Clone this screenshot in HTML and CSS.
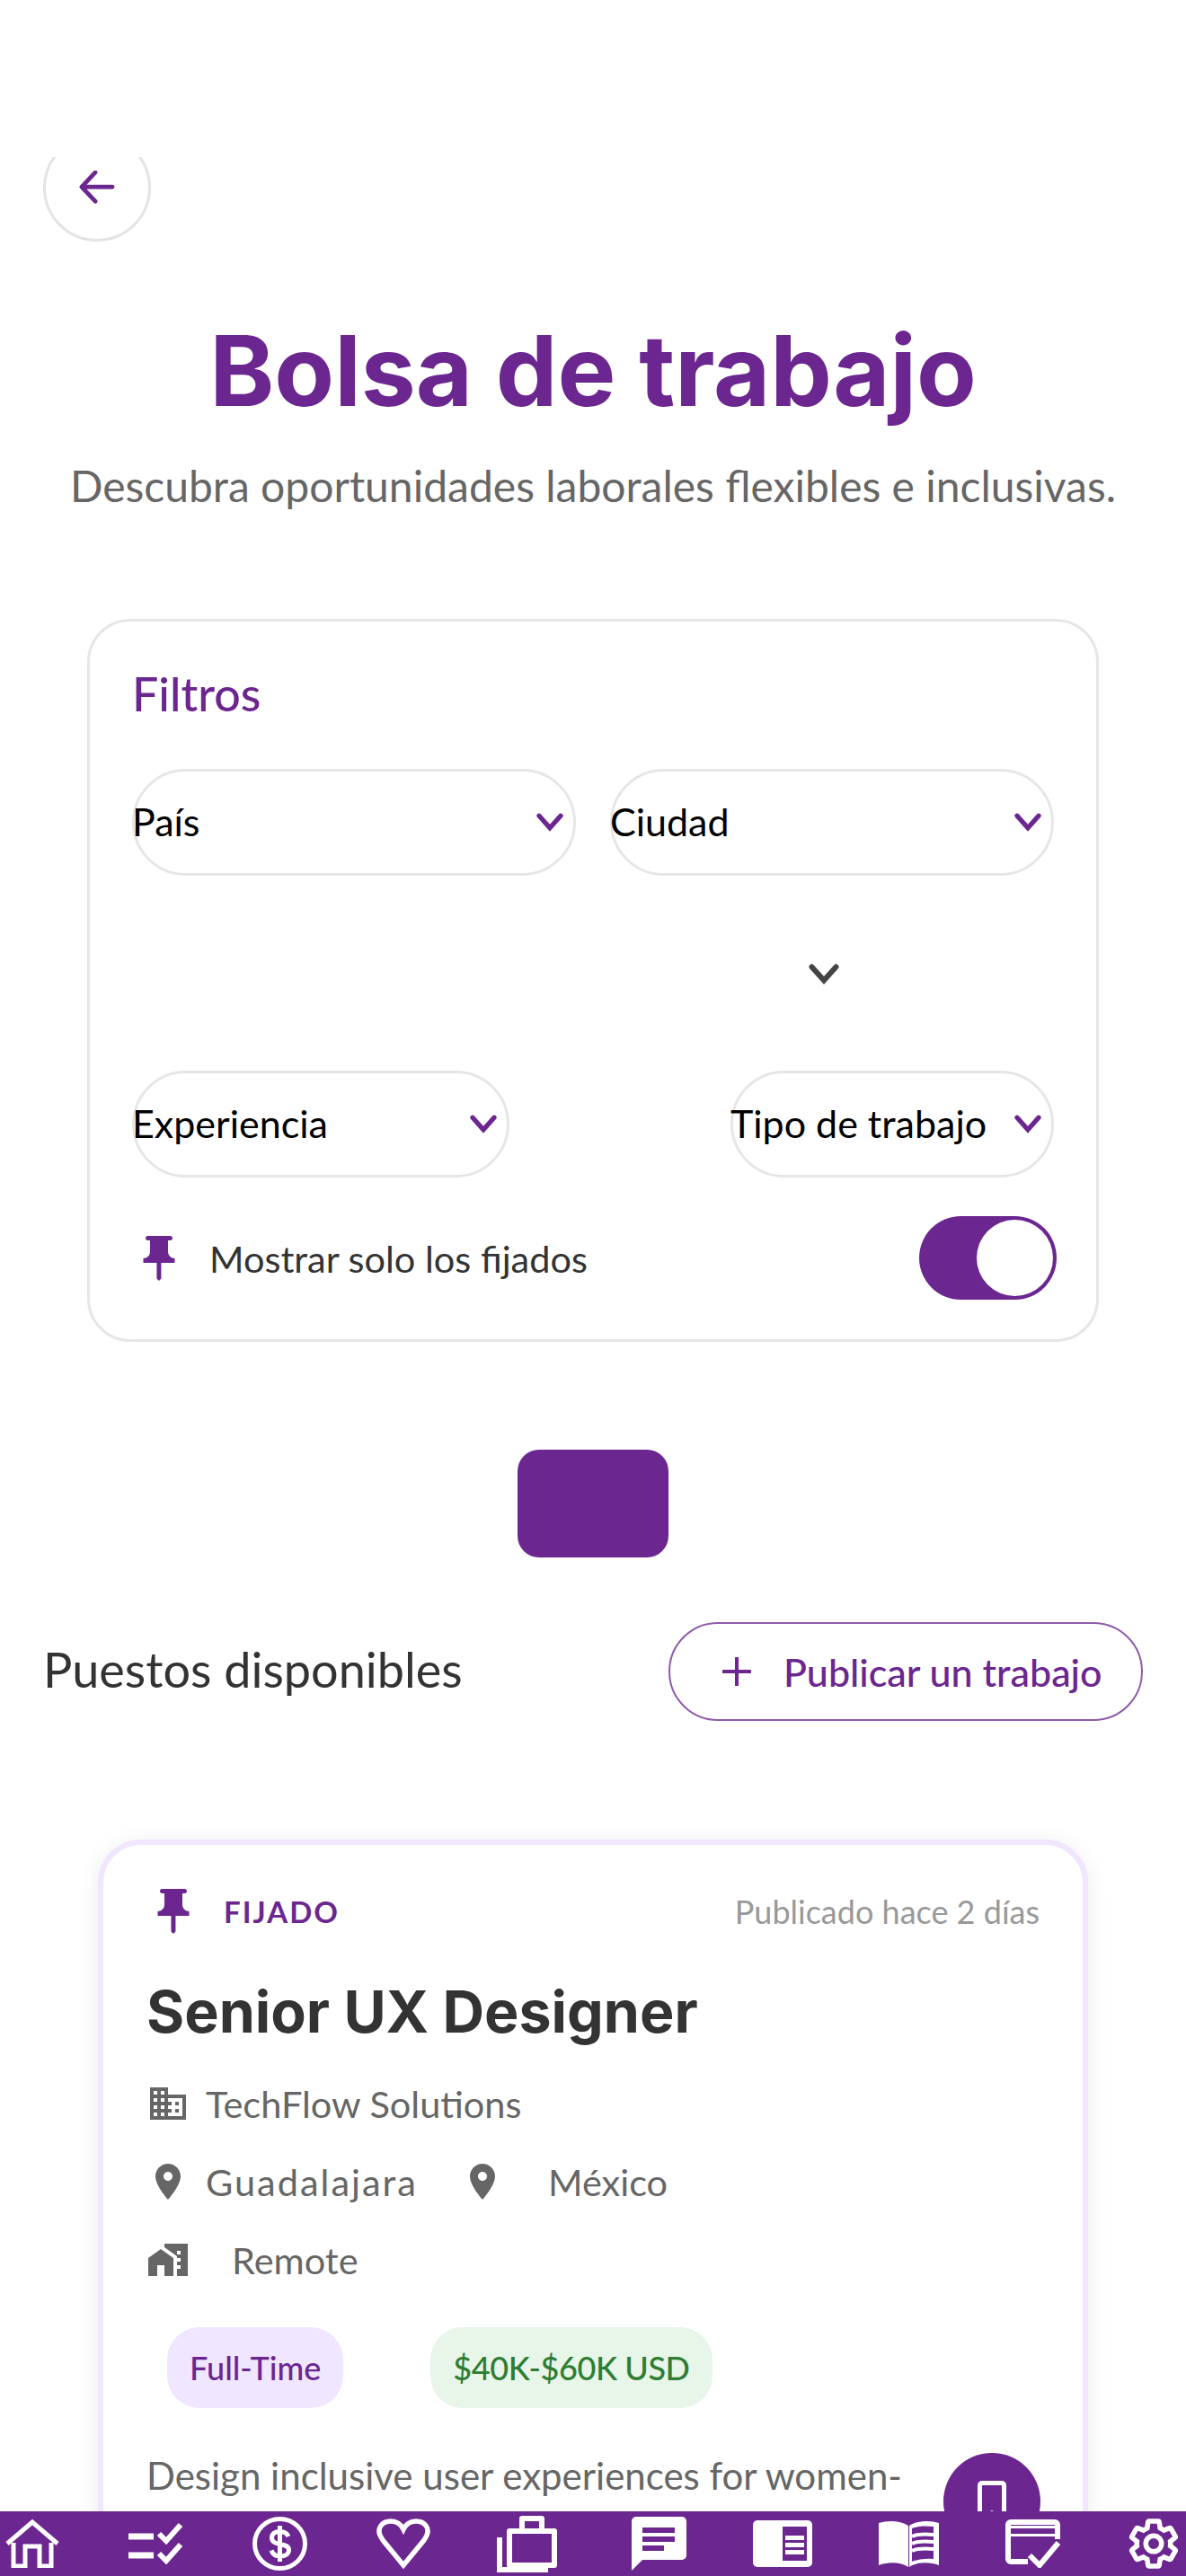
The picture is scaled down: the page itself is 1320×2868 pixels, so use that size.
FILE: index.html
```html
<!DOCTYPE html>
<html lang="es">
<head>
    <meta charset="UTF-8">
    <meta name="viewport" content="width=device-width, initial-scale=1.0">
    <title>Bolsa de trabajo</title>
    <link rel="stylesheet" href="styles.css">
</head>
<body>
    <div class="safe-top"></div>

    <main class="screen">
        <button class="back-btn" type="button" aria-label="Volver">
            <svg viewBox="0 0 40 40" width="40" height="38"><path d="M38 19H3M18 2L2 19l16 17" fill="none" stroke="currentColor" stroke-width="5" stroke-linecap="round" stroke-linejoin="round"/></svg>
        </button>

        <h1 class="page-title">Bolsa de trabajo</h1>
        <p class="page-sub">Descubra oportunidades laborales flexibles e inclusivas.</p>

        <!-- Filtros -->
        <section class="filters">
            <h2 class="filters-title">Filtros</h2>
            <div class="select-row">
                <div class="select select-wide"><span>País</span><svg class="chev" viewBox="0 0 24 16"><path d="M3 3l9 10 9-10" /></svg></div>
                <div class="select select-wide"><span>Ciudad</span><svg class="chev" viewBox="0 0 24 16"><path d="M3 3l9 10 9-10" /></svg></div>
            </div>
            <div class="lone-chev"><svg class="chev chev-dark" viewBox="0 0 24 16"><path d="M3 3l9 10 9-10" /></svg></div>
            <div class="select-row">
                <div class="select select-exp"><span>Experiencia</span><svg class="chev" viewBox="0 0 24 16"><path d="M3 3l9 10 9-10" /></svg></div>
                <div class="select select-type"><span>Tipo de trabajo</span><svg class="chev" viewBox="0 0 24 16"><path d="M3 3l9 10 9-10" /></svg></div>
            </div>
            <div class="pin-row">
                <svg class="icon-pin" viewBox="0 0 24 24"><path d="M16 9V4h1c.55 0 1-.45 1-1s-.45-1-1-1H7c-.55 0-1 .45-1 1s.45 1 1 1h1v5c0 1.66-1.34 3-3 3v2h5.97v7l1 1 1-1v-7H19v-2c-1.66 0-3-1.34-3-3z"/></svg>
                <span class="pin-label">Mostrar solo los fijados</span>
                <div class="toggle"><div class="toggle-thumb"></div></div>
            </div>
        </section>

        <div class="search-btn"></div>

        <div class="list-head">
            <h2 class="list-title">Puestos disponibles</h2>
            <button class="post-btn" type="button">
                <svg viewBox="0 0 32 32" width="32" height="32"><path d="M16 1v30M1 16h30" fill="none" stroke="currentColor" stroke-width="4" stroke-linecap="round"/></svg>
                <span>Publicar un trabajo</span>
            </button>
        </div>

        <!-- Tarjeta de empleo -->
        <article class="job-card">
            <div class="job-top">
                <div class="job-pinned">
                    <svg class="icon-pin" viewBox="0 0 24 24"><path d="M16 9V4h1c.55 0 1-.45 1-1s-.45-1-1-1H7c-.55 0-1 .45-1 1s.45 1 1 1h1v5c0 1.66-1.34 3-3 3v2h5.97v7l1 1 1-1v-7H19v-2c-1.66 0-3-1.34-3-3z"/></svg>
                    <span>FIJADO</span>
                </div>
                <span class="job-date">Publicado hace 2 días</span>
            </div>
            <h3 class="job-title">Senior UX Designer</h3>
            <div class="meta-row meta-first">
                <svg class="icon-meta" viewBox="0 0 24 24"><path d="M12 7V3H2v18h20V7H12zM6 19H4v-2h2v2zm0-4H4v-2h2v2zm0-4H4V9h2v2zm0-4H4V5h2v2zm4 12H8v-2h2v2zm0-4H8v-2h2v2zm0-4H8V9h2v2zm0-4H8V5h2v2zm10 12h-8v-2h2v-2h-2v-2h2v-2h-2V9h8v10zm-2-8h-2v2h2v-2zm0 4h-2v2h2v-2z"/></svg>
                <span>TechFlow Solutions</span>
            </div>
            <div class="meta-row">
                <svg class="icon-meta" viewBox="0 0 24 24"><path d="M12 2C8.13 2 5 5.13 5 9c0 5.25 7 13 7 13s7-7.75 7-13c0-3.87-3.13-7-7-7zm0 9.5c-1.38 0-2.5-1.12-2.5-2.5s1.12-2.5 2.5-2.5 2.5 1.12 2.5 2.5-1.12 2.5-2.5 2.5z"/></svg>
                <span class="city">Guadalajara</span>
                <svg class="icon-meta icon-country" viewBox="0 0 24 24"><path d="M12 2C8.13 2 5 5.13 5 9c0 5.25 7 13 7 13s7-7.75 7-13c0-3.87-3.13-7-7-7zm0 9.5c-1.38 0-2.5-1.12-2.5-2.5s1.12-2.5 2.5-2.5 2.5 1.12 2.5 2.5-1.12 2.5-2.5 2.5z"/></svg>
                <span class="country">México</span>
            </div>
            <div class="meta-row meta-remote">
                <svg class="icon-meta" viewBox="0 0 24 24"><path d="M1 11v10h5v-6h4v6h5V11L8 6z"/><path d="M10 3v1.97l7 5V11h2v2h-2v2h2v2h-2v4h6V3H10zm9 6h-2V7h2v2z"/></svg>
                <span>Remote</span>
            </div>
            <div class="tags">
                <span class="tag tag-type">Full-Time</span>
                <span class="tag tag-pay">$40K-$60K USD</span>
            </div>
            <p class="job-desc">Design inclusive user experiences for women-focused fintech platforms.</p>
        </article>

        <button class="fab" type="button" aria-label="Contacto">
            <svg viewBox="0 0 32 50" width="32" height="50"><path d="M5 2.500h22a2.500 2.500 0 0 1 2.500 2.500v40a2.500 2.500 0 0 1-2.500 2.500H5A2.500 2.500 0 0 1 2.500 45V5A2.500 2.500 0 0 1 5 2.500z" fill="none" stroke="#fff" stroke-width="5"/><path d="M10 36l6-3 6 3v3H10z" fill="#fff"/></svg>
        </button>
    </main>

    <!-- Barra inferior -->
    <nav class="bottom-nav">
        <div class="nav-group nav-left">
            <svg width="60" height="54" viewBox="0 0 60 54"><path d="M9 26v26h13V30h16v22h13V26" fill="none" stroke="#fff" stroke-width="5"/><path d="M2 27L30 3l28 24" fill="none" stroke="#fff" stroke-width="5"/></svg>
            <svg width="61" height="46" viewBox="0 0 61 46"><path d="M0 15h28M0 36h28" stroke="#fff" stroke-width="7" fill="none"/><path d="M34 12l8 8 16-18M34 34l8 8 16-18" stroke="#fff" stroke-width="6" fill="none"/></svg>
            <svg width="61" height="60" viewBox="0 0 61 60"><ellipse cx="30.5" cy="30" rx="28" ry="27.5" fill="none" stroke="#fff" stroke-width="5"/><path d="M40 22c-1.500-3.500-5-5.500-9.500-5.500-5.500 0-9 2.500-9 7 0 10 19 4.500 19 13.500 0 4.500-4 7-9.500 7-4.500 0-8.500-2.500-10-6.500M30.500 10v40" fill="none" stroke="#fff" stroke-width="5"/></svg>
            <svg width="60" height="56" viewBox="0 0 60 56"><path d="M30 52L7 24C-3 10 8 3 16 3c6 0 11 3 14 9 3-6 8-9 14-9 8 0 19 7 9 21z" fill="none" stroke="#fff" stroke-width="5.500"/></svg>
            <svg class="nav-work" width="67" height="64" viewBox="0 0 67 64"><path d="M14 18h50v38H14zM28 18V4h22v14" fill="none" stroke="#fff" stroke-width="6" stroke-linejoin="round"/><path d="M3 25v36h54" fill="none" stroke="#fff" stroke-width="6"/></svg>
        </div>
        <div class="nav-group">
            <svg width="61" height="60" viewBox="0 0 61 60"><path d="M5 0h51a5 5 0 0 1 5 5v38a5 5 0 0 1-5 5H12L0 60V5a5 5 0 0 1 5-5z" fill="#fff"/><path d="M12 12h36v6H12zM12 22h36v6H12zM12 32h24v6H12z" fill="#6b2690"/></svg>
            <svg width="66" height="52" viewBox="0 0 66 52"><rect width="66" height="52" rx="5" fill="#fff"/><path d="M33 7h27v38H33z" fill="#6b2690"/><path d="M36 17h21v5H36zM36 25h21v5H36zM36 33h21v5H36z" fill="#fff"/></svg>
            <svg width="67" height="52" viewBox="0 0 67 52"><path d="M0 3c10-3 24-3 33 3v46C25 46 10 46 0 50z" fill="#fff"/><path d="M67 3c-10-3-24-3-33 3v46c8-6 23-6 33-2z" fill="#fff"/><path d="M37 9c7-3 16-3 24-2v36c-8-1-17 0-24 3z" fill="#6b2690"/><path d="M37 18c6-3 14-3 24-2M37 26c6-3 14-3 24-2M37 34c6-3 14-3 24-2" stroke="#fff" stroke-width="4" fill="none"/></svg>
            <svg width="61" height="54" viewBox="0 0 61 54"><path d="M25 47H6a3 3 0 0 1-3-3V6a3 3 0 0 1 3-3h49a3 3 0 0 1 3 3v16" fill="none" stroke="#fff" stroke-width="6"/><path d="M3 7h55v12H3z" fill="#fff"/><path d="M6 13h49" stroke="#6b2690" stroke-width="6"/><path d="M27 40l11 11 21-25" fill="none" stroke="#fff" stroke-width="6"/></svg>
            <svg width="60" height="60" viewBox="0 0 24 24"><path d="M19.430 12.980c.04-.32.07-.64.07-.98s-.03-.66-.07-.98l2.110-1.650c.19-.15.24-.42.12-.64l-2-3.460c-.12-.22-.39-.3-.61-.22l-2.490 1c-.52-.4-1.080-.73-1.690-.98l-.38-2.650C14.460 2.180 14.250 2 14 2h-4c-.25 0-.46.18-.49.42l-.38 2.650c-.61.25-1.170.59-1.690.98l-2.490-1c-.23-.09-.49 0-.61.22l-2 3.460c-.13.22-.07.49.12.64l2.110 1.650c-.04.32-.07.65-.07.98s.03.66.07.98l-2.110 1.650c-.19.15-.24.42-.12.64l2 3.460c.12.22.39.3.61.22l2.490-1c.52.4 1.080.73 1.690.98l.38 2.650c.03.24.24.42.49.42h4c.25 0 .46-.18.49-.42l.38-2.650c.61-.25 1.170-.59 1.690-.98l2.490 1c.23.09.49 0 .61-.22l2-3.460c.12-.22.07-.49-.12-.64l-2.110-1.650zM12 15.500c-1.930 0-3.500-1.570-3.500-3.500s1.570-3.500 3.500-3.500 3.500 1.570 3.500 3.500-1.570 3.500-3.500 3.500z" fill="none" stroke="#fff" stroke-width="2.200"/></svg>
        </div>
    </nav>
</body>
</html>
```

FILE: styles.css
```css
* {
    box-sizing: border-box;
}
html, body {
    height: 100%;
}
body {
    margin: 0;
    display: flex;
    flex-direction: column;
    height: 2868px;
    overflow: hidden;
    background: #fff;
    font-family: "Lato", "Liberation Sans", sans-serif;
    color: #333;
}
h1, h2, h3, p {
    margin: 0;
}
button {
    font-family: inherit;
    background: none;
    padding: 0;
}
.safe-top {
    height: 175px;
    flex: none;
}
.screen {
    flex: 1;
    min-height: 0;
    overflow: hidden;
    position: relative;
}
.bottom-nav {
    flex: none;
    height: 72px;
    background: #6b2690;
    display: flex;
    align-items: center;
    justify-content: space-between;
    padding: 0 6px;
}
.nav-group {
    display: flex;
    align-items: center;
    gap: 74px;
}
.nav-left {
    gap: 77px;
}
.nav-work {
    margin-left: -3px;
}
.back-btn {
    display: flex;
    align-items: center;
    justify-content: center;
    width: 120px;
    height: 120px;
    margin: -26px 0 0 48px;
    border: 3px solid #e4e4e4;
    border-radius: 50%;
    color: #6b2690;
}
.page-title {
    margin-top: 78px;
    text-align: center;
    font-family: "Inter", "Liberation Sans", sans-serif;
    font-size: 109px;
    line-height: 130px;
    font-weight: 700;
    color: #6b2690;
}
.page-sub {
    margin-top: 32px;
    text-align: center;
    font-size: 48px;
    line-height: 64px;
    font-weight: 400;
    color: #666;
}
.filters {
    margin: 116px 97px 0;
    height: 805px;
    padding: 48px 47px 0;
    border: 3px solid #e6e6e6;
    border-radius: 48px;
}
.filters-title {
    font-size: 52px;
    line-height: 64px;
    font-weight: 500;
    color: #6b2690;
}
.select-row {
    display: flex;
    justify-content: space-between;
}
.filters-title + .select-row {
    margin-top: 52px;
}
.select {
    display: flex;
    align-items: center;
    justify-content: space-between;
    height: 119px;
    padding: 0 10px 2px 0;
    border: 3px solid #e6e6e6;
    border-radius: 60px;
    font-size: 43px;
    color: #000;
}
.select span {
    margin-left: -3px;
}
.select-wide {
    width: 494px;
}
.select-exp {
    width: 420px;
}
.select-type {
    width: 360px;
}
.chev {
    width: 32px;
    height: 22px;
    flex: none;
    fill: none;
    stroke: #6b2690;
    stroke-width: 4;
    stroke-linecap: round;
}
.chev-dark {
    stroke: #444;
    width: 36px;
    height: 24px;
}
.lone-chev {
    height: 217px;
    display: flex;
    align-items: center;
    padding-left: 752px;
}
.pin-row {
    margin-top: 43px;
    display: flex;
    align-items: center;
}
.icon-pin {
    width: 60px;
    height: 60px;
    flex: none;
    fill: #6b2690;
}
.pin-label {
    margin-left: 26px;
    font-size: 41.5px;
    font-weight: 400;
    color: #333;
}
.toggle {
    margin: 0 -3px 0 auto;
    width: 153px;
    height: 93px;
    padding: 4px;
    border-radius: 47px;
    background: #6b2690;
    display: flex;
    justify-content: flex-end;
}
.toggle-thumb {
    width: 85px;
    height: 85px;
    border-radius: 50%;
    background: #fff;
}
.search-btn {
    width: 168px;
    height: 120px;
    margin: 120px auto 0;
    border-radius: 24px;
    background: #6b2690;
}
.list-head {
    margin-top: 72px;
    padding: 0 48px;
    display: flex;
    align-items: center;
    justify-content: space-between;
}
.list-title {
    padding-bottom: 6px;
    font-size: 54px;
    font-weight: 400;
    color: #333;
}
.post-btn {
    display: flex;
    align-items: center;
    gap: 36px;
    width: 528px;
    height: 110px;
    padding-left: 58px;
    border: 2px solid #8f5bab;
    border-radius: 55px;
    color: #6b2690;
    font-size: 43px;
    font-weight: 500;
}
.job-card {
    margin: 132px 109px 0;
    height: 900px;
    padding: 44px 48px 0;
    background: #fff;
    border: 6px solid #f0e6ff;
    border-radius: 48px;
    box-shadow: 0 4px 24px rgba(0, 0, 0, 0.08);
}
.job-top {
    display: flex;
    align-items: center;
    justify-content: space-between;
}
.job-pinned {
    display: flex;
    align-items: center;
    gap: 26px;
    color: #6b2690;
    font-size: 33px;
    font-weight: 700;
    letter-spacing: 2px;
}
.job-date {
    font-size: 36px;
    font-weight: 400;
    color: #999;
}
.job-title {
    margin-top: 40px;
    font-family: "Inter", "Liberation Sans", sans-serif;
    font-size: 64.5px;
    line-height: 84px;
    font-weight: 700;
    color: #333;
}
.meta-row {
    margin-top: 39px;
    height: 48px;
    display: flex;
    align-items: center;
    gap: 18px;
    font-size: 41.5px;
    font-weight: 400;
    color: #666;
}
.meta-first {
    margin-top: 36px;
}
.icon-meta {
    width: 48px;
    height: 48px;
    flex: none;
    fill: #666;
}
.city {
    letter-spacing: 2px;
}
.icon-country {
    margin-left: 30px;
}
.country {
    margin-left: 31px;
}
.meta-remote {
    gap: 47px;
}
.tags {
    margin-top: 51px;
    padding-left: 23px;
    display: flex;
    gap: 97px;
}
.tag {
    height: 90px;
    padding: 0 25px;
    display: flex;
    align-items: center;
    border-radius: 36px;
    font-size: 36px;
    font-weight: 500;
}
.tag-type {
    background: #f0e6ff;
    color: #6b2690;
}
.tag-pay {
    background: #e8f5e9;
    color: #2e7d32;
    letter-spacing: -0.4px;
}
.job-desc {
    margin-top: 45px;
    width: 850px;
    font-size: 42px;
    line-height: 60px;
    font-weight: 400;
    color: #666;
}
.fab {
    position: absolute;
    left: 1050px;
    top: 2556px;
    width: 108px;
    height: 108px;
    border: 0;
    border-radius: 50%;
    background: #6b2690;
    padding-top: 6px;
}
```
